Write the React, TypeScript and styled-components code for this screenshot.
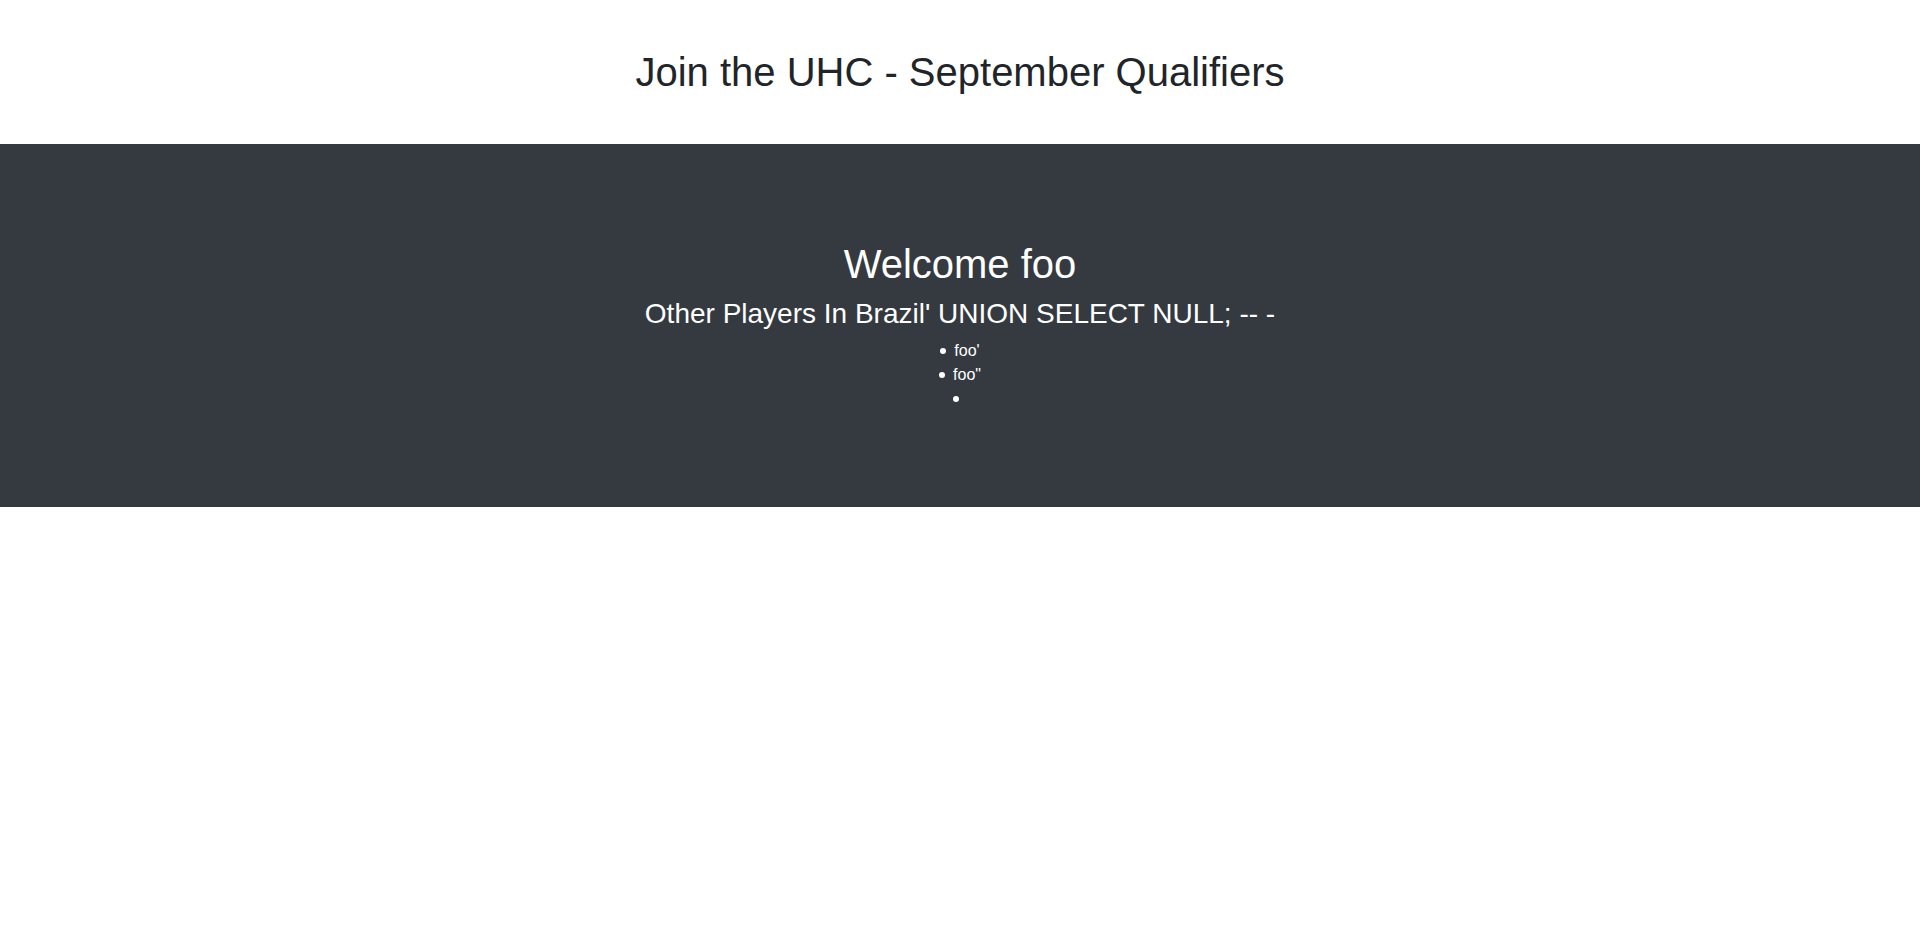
import React from 'react';
import styled, { createGlobalStyle } from 'styled-components';

const GlobalStyle = createGlobalStyle`
  html, body {
    margin: 0;
    padding: 0;
  }
  body {
    font-family: "Liberation Sans", Arial, sans-serif;
    font-size: 16px;
    line-height: 1.5;
    color: #212529;
    background: #ffffff;
  }
  * {
    box-sizing: border-box;
  }
`;

const Header = styled.header`
  padding: 48px 0;
  text-align: center;
`;

const Title = styled.h1`
  margin: 0;
  font-size: 40px;
  font-weight: 400;
  line-height: 1.2;
`;

const Jumbotron = styled.section`
  background: #343a40;
  color: #ffffff;
  text-align: center;
  padding: 96px 32px 96px;
`;

const Welcome = styled.h1`
  margin: 0 0 9px;
  font-size: 40px;
  font-weight: 400;
  line-height: 1.2;
`;

const Subtitle = styled.h3`
  margin: 0 0 8px;
  font-size: 28px;
  font-weight: 400;
  line-height: 1.2;
`;

const PlayerList = styled.ul`
  margin: 0;
  padding: 0;
  list-style: none;
`;

const Player = styled.li`
  min-height: 24px;

  &::before {
    content: '';
    display: inline-block;
    width: 6px;
    height: 6px;
    margin-right: 8px;
    border-radius: 50%;
    background: currentColor;
    vertical-align: middle;
  }
`;

const players = ["foo'", 'foo"', ''];

function App() {
  return (
    <>
      <GlobalStyle />
      <Header>
        <Title>Join the UHC - September Qualifiers</Title>
      </Header>
      <Jumbotron>
        <Welcome>Welcome foo</Welcome>
        <Subtitle>Other Players In Brazil' UNION SELECT NULL; -- -</Subtitle>
        <PlayerList>
          {players.map((name, i) => (
            <Player key={i}>{name}</Player>
          ))}
        </PlayerList>
      </Jumbotron>
    </>
  );
}

export default App;
